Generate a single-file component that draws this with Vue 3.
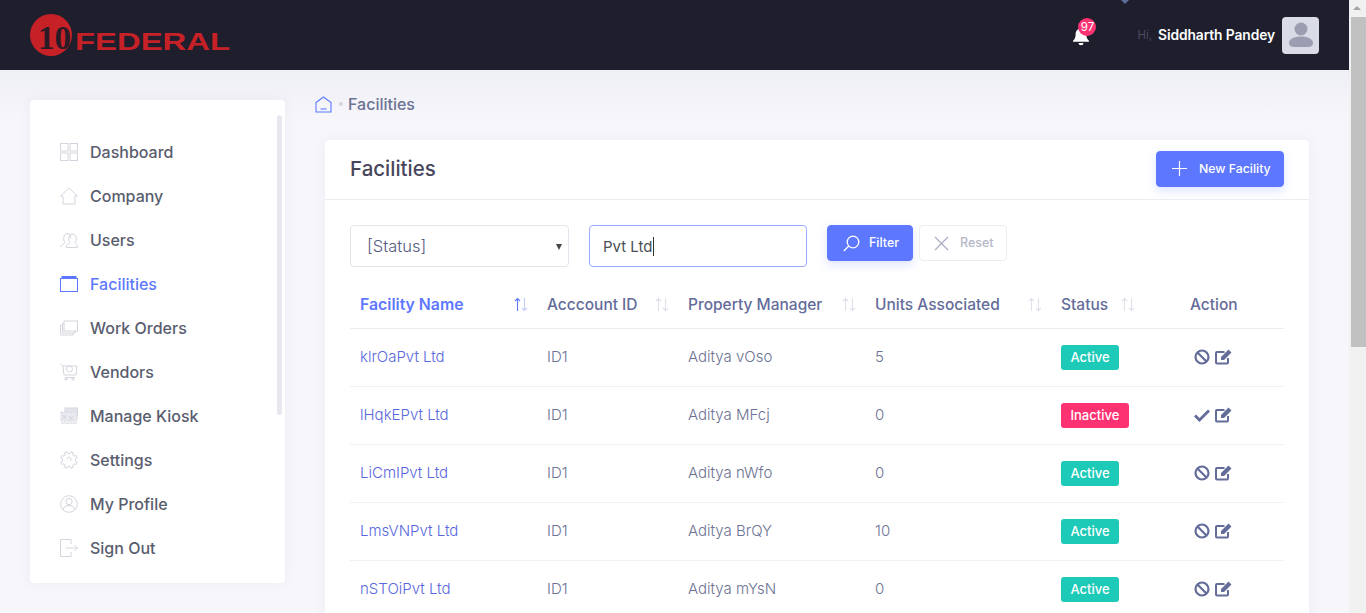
<script setup>
const menu = [
  { label: 'Dashboard', icon: 'dash' },
  { label: 'Company', icon: 'home' },
  { label: 'Users', icon: 'users' },
  { label: 'Facilities', icon: 'fac', active: true },
  { label: 'Work Orders', icon: 'orders' },
  { label: 'Vendors', icon: 'cart' },
  { label: 'Manage Kiosk', icon: 'kiosk' },
  { label: 'Settings', icon: 'gear' },
  { label: 'My Profile', icon: 'profile' },
  { label: 'Sign Out', icon: 'out' }
]
const cols = [
  { label: 'Facility Name', active: true },
  { label: 'Acccount ID' },
  { label: 'Property Manager' },
  { label: 'Units Associated' },
  { label: 'Status', inline: true }
]
const rows = [
  { name: 'klrOaPvt Ltd', id: 'ID1', pm: 'Aditya vOso', units: 5, active: true },
  { name: 'lHqkEPvt Ltd', id: 'ID1', pm: 'Aditya MFcj', units: 0, active: false },
  { name: 'LiCmIPvt Ltd', id: 'ID1', pm: 'Aditya nWfo', units: 0, active: true },
  { name: 'LmsVNPvt Ltd', id: 'ID1', pm: 'Aditya BrQY', units: 10, active: true },
  { name: 'nSTOiPvt Ltd', id: 'ID1', pm: 'Aditya mYsN', units: 0, active: true }
]
const pt = (r, deg) => {
  const a = (deg * Math.PI) / 180
  return `${(9 + r * Math.cos(a)).toFixed(2)} ${(9 + r * Math.sin(a)).toFixed(2)}`
}
const gearPath = Array.from({ length: 8 }, (_, k) => {
  const c = k * 45 + 22.5
  return `${k ? 'L' : 'M'}${pt(6.4, c - 14)}L${pt(8.5, c - 9)}L${pt(8.5, c + 9)}L${pt(6.4, c + 14)}`
}).join('') + 'Z'
</script>

<template>
  <div class="page">
    <header class="topbar">
      <svg class="logo" width="204" height="44" viewBox="0 0 204 44">
        <circle cx="21" cy="22" r="21" fill="#c62127" />
        <text x="24.500" y="36" text-anchor="middle" font-family="Liberation Serif, serif" font-weight="700" font-size="34" fill="#2a1c26" textLength="33" lengthAdjust="spacingAndGlyphs">10</text>
        <text x="45" y="36.500" font-family="Liberation Sans, sans-serif" font-weight="700" font-size="24" fill="#c62127" textLength="155" lengthAdjust="spacingAndGlyphs">FEDERAL</text>
      </svg>
      <div class="top-right">
        <div class="bell">
          <svg width="18" height="19" viewBox="0 0 18 19">
            <path d="M9 1.500c3.600 0 5.400 2.800 5.400 6 0 3.400 1 4.800 2.600 6.300v1H1v-1c1.600-1.500 2.600-2.900 2.600-6.300 0-3.200 1.800-6 5.400-6z" fill="#fff" />
            <path d="M6.500 16h5a2.500 2.200 0 0 1-5 0z" fill="#fff" />
          </svg>
          <span class="bell-badge">97</span>
        </div>
        <span class="hi">Hi,</span>
        <span class="uname">Siddharth Pandey</span>
        <div class="avatar">
          <svg width="24" height="26" viewBox="0 0 24 26">
            <circle cx="12" cy="7" r="6.500" fill="#9a9eb0" />
            <path d="M0 21c0-4 5-6.500 12-6.500S24 17 24 21c0 2.500-2 4-5 4H5c-3 0-5-1.500-5-4z" fill="#9a9eb0" />
          </svg>
        </div>
      </div>
      <span class="notch"></span>
    </header>

    <div class="body">
      <aside class="sidebar">
        <span class="side-scroll"></span>
        <a v-for="m in menu" :key="m.label" class="item" :class="{ on: m.active }">
          <svg class="mi" width="18" height="18" viewBox="0 0 18 18" fill="none" stroke="currentColor" stroke-width="1">
            <template v-if="m.icon === 'dash'">
              <rect x="0.500" y="0.500" width="7.500" height="7.500" /><rect x="10" y="0.500" width="7.500" height="7.500" />
              <rect x="0.500" y="10" width="7.500" height="7.500" /><rect x="10" y="10" width="7.500" height="7.500" />
            </template>
            <path v-else-if="m.icon === 'home'" d="M0.500 9 9 1l8.500 8H15v8H3V9z" />
            <template v-else-if="m.icon === 'users'">
              <path d="M0.500 16.500c0-3 4-3 4.500-5-2-2-2-8 2-9 3 0 4 2 3.500 5" />
              <path d="M6 16.500c0-3 3-3 4-5-2-2-2-8 2.500-8.500 4.500.5 4.500 6.500 2.500 8.500 1 2 2.500 2 2.500 5z" />
            </template>
            <template v-else-if="m.icon === 'fac'">
              <rect x="0.500" y="3.500" width="17" height="13" />
              <rect x="1.500" y="1" width="15" height="3" fill="currentColor" stroke="none" />
            </template>
            <template v-else-if="m.icon === 'orders'">
              <rect x="4" y="2" width="13.500" height="10" />
              <path d="M4 4.500H2.500V14H15v-2M2.500 6.500H.5V16H13v-2" />
            </template>
            <template v-else-if="m.icon === 'cart'">
              <path d="M0.500 1 3 3h14l-1 9H4L3 3" />
              <circle cx="9.500" cy="6" r="3" />
              <path d="M5 14.500h10" />
              <circle cx="6" cy="16" r="1.200" /><circle cx="13" cy="16" r="1.200" />
            </template>
            <template v-else-if="m.icon === 'kiosk'">
              <rect x="5" y="1" width="12.500" height="8" fill="#e4e5ec" />
              <rect x="1" y="5" width="16" height="9" fill="#e9eaf0" stroke-dasharray="2 1" />
              <path d="M3 8l3 4M6 8l-3 4M9 9l4 4M13 9l-4 4M1 16h16" />
            </template>
            <template v-else-if="m.icon === 'gear'">
              <path :d="gearPath" />
              <path d="M7 8a2 2 0 1 1 3 2" />
            </template>
            <template v-else-if="m.icon === 'profile'">
              <circle cx="9" cy="9" r="8.300" />
              <circle cx="9" cy="6.500" r="3.200" />
              <path d="M3 14.500c1-3 3-4 6-4s5 1 6 4" />
            </template>
            <template v-else-if="m.icon === 'out'">
              <path d="M11 5V.5H.5v17H11V13" />
              <path d="M6 9h11.500M14.500 6l3 3-3 3" />
            </template>
          </svg>
          <span>{{ m.label }}</span>
        </a>
      </aside>

      <main class="main">
        <div class="crumb">
          <svg width="17" height="17" viewBox="0 0 17 17" fill="none" stroke="#5d78ff" stroke-width="1.100">
            <path d="M1 6.500 8.500 1 16 6.500V16H1z" /><path d="M5.500 13h6" />
          </svg>
          <i class="dot"></i>
          <span>Facilities</span>
        </div>
        <section class="card">
          <div class="card-head">
            <h3>Facilities</h3>
            <button class="btn primary new">
              <svg width="15" height="15" viewBox="0 0 15 15" stroke="#fff" stroke-width="1.200"><path d="M7.500 0v15M0 7.500h15" /></svg>
              New Facility
            </button>
          </div>
          <div class="card-body">
            <div class="filters">
              <div class="sel-wrap"><select class="sel"><option>[Status]</option></select></div>
              <div class="txt"><span>Pvt Ltd</span><i class="caret"></i></div>
              <button class="btn primary filter">
                <svg width="17" height="17" viewBox="0 0 17 17" fill="none" stroke="#fff" stroke-width="1.300"><circle cx="10" cy="7" r="5.800" /><path d="M5.800 11 .8 16" /></svg>
                Filter
              </button>
              <button class="btn reset">
                <svg width="15" height="15" viewBox="0 0 15 15" stroke="#a9adc3" stroke-width="1.200"><path d="M1 1l13 13M14 1 1 14" /></svg>
                Reset
              </button>
            </div>
            <table class="tbl">
              <colgroup>
                <col style="width:187px" /><col style="width:141px" /><col style="width:187px" />
                <col style="width:186px" /><col style="width:129px" /><col />
              </colgroup>
              <thead>
                <tr>
                  <th v-for="c in cols" :key="c.label" :class="{ act: c.active }">
                    <div class="th" :class="{ inl: c.inline }">
                      <span>{{ c.label }}</span>
                      <svg class="sort" width="14" height="15" viewBox="0 0 14 15" fill="none" stroke-width="1.100">
                        <path d="M3.500 14V1.500M1 4l2.500-2.500L6 4" :stroke="c.active ? '#5d78ff' : '#dfe1ea'" />
                        <path d="M10.500 1v12.500M8 11l2.500 2.500L13 11" :stroke="c.active ? '#c4cdf5' : '#dfe1ea'" />
                      </svg>
                    </div>
                  </th>
                  <th class="act-h">Action</th>
                </tr>
              </thead>
              <tbody>
                <tr v-for="r in rows" :key="r.name">
                  <td class="lnk"><span class="cell">{{ r.name }}</span></td>
                  <td><span class="cell">{{ r.id }}</span></td>
                  <td><span class="cell">{{ r.pm }}</span></td>
                  <td><span class="cell">{{ r.units }}</span></td>
                  <td><span class="badge" :class="r.active ? 'ok' : 'no'">{{ r.active ? 'Active' : 'Inactive' }}</span></td>
                  <td>
                    <div class="acts">
                      <svg width="16" height="16" viewBox="0 0 16 16" fill="none" stroke="#646c9a" stroke-width="2.200">
                        <template v-if="r.active"><circle cx="8" cy="8" r="6.500" /><path d="M3.500 3.500l9 9" /></template>
                        <path v-else d="M1 8.500l4.500 4.500L15 3.500" stroke-width="2.800" />
                      </svg>
                      <svg width="18" height="16" viewBox="0 0 18 16">
                        <path d="M13 9v4.500a1 1 0 0 1-1 1H2a1 1 0 0 1-1-1V4a1 1 0 0 1 1-1h7.500" fill="none" stroke="#646c9a" stroke-width="2" />
                        <path d="M6 8l7.500-7.500 3 3L9 11H6zM14.500 0l3 3" fill="#646c9a" />
                      </svg>
                    </div>
                  </td>
                </tr>
              </tbody>
            </table>
          </div>
        </section>
      </main>
    </div>

    <div class="vscroll"><span class="arrow"></span><span class="thumb"></span></div>
  </div>
</template>

<style>
html, body { margin: 0; height: 100%; overflow: hidden; background: #f7f7fb; }
</style>

<style scoped>
.page { position: relative; width: 1366px; height: 613px; overflow: hidden; font-family: Inter, "Noto Sans", sans-serif; color: #646c9a; padding-right: 17px; box-sizing: border-box; background: linear-gradient(#eeeff5 70px, #f6f6fb 120px); }
.topbar { position: relative; height: 70px; background: #1e1e2d; display: flex; align-items: center; justify-content: space-between; padding: 0 30px; }
.logo { display: block; }
.notch { position: absolute; left: 1121px; top: 0; border: 4px solid transparent; border-top-color: #5f6a9c; border-bottom: 0; }
.top-right { display: flex; align-items: center; }
.bell { position: relative; width: 18px; height: 19px; margin-right: 47px; margin-top: 2px; }
.bell svg { display: block; }
.bell-badge { position: absolute; left: 6px; top: -9px; width: 18px; height: 18px; border-radius: 50%; background: #fd3273; color: #fff; font-size: 11.500px; line-height: 18px; text-align: center; }
.hi { font-size: 11.500px; color: #4a4a5c; margin-right: 6px; }
.uname { font-size: 13.800px; font-weight: 600; color: #fff; margin-right: 7px; letter-spacing: -0.100px; }
.avatar { width: 37px; height: 37px; border-radius: 4px; background: #d9dce6; display: flex; align-items: flex-end; justify-content: center; padding-bottom: 6px; box-sizing: border-box; }
.body { display: flex; align-items: flex-start; padding: 30px 40px 0 30px; }
.sidebar { position: relative; width: 255px; flex: none; background: #fff; border-radius: 4px; padding: 30px 0 13px 30px; box-sizing: border-box; box-shadow: 0 0 13px rgba(82,63,105,.05); }
.side-scroll { position: absolute; right: 3px; top: 15px; width: 5px; height: 300px; border-radius: 3px; background: #e7e8ef; }
.item { display: flex; align-items: center; height: 44px; gap: 12px; font-size: 16px; font-weight: 500; color: #595d6e; }
.item .mi { color: #d4d5de; flex: none; }
.item.on, .item.on .mi { color: #5d78ff; }
.main { flex: 1; min-width: 0; padding-left: 30px; }
.crumb { display: flex; align-items: center; height: 20px; margin-top: -6px; margin-bottom: 26px; font-size: 16px; font-weight: 500; color: #6c7293; }
.dot { width: 4px; height: 4px; border-radius: 50%; background: #d5d6e2; margin: 0 5px 0 7px; }
.card { width: 984px; margin-left: 10px; background: #fff; border-radius: 4px; box-shadow: 0 0 13px rgba(82,63,105,.05); }
.card-head { display: flex; align-items: center; justify-content: space-between; height: 59px; padding: 0 25px; border-bottom: 1px solid #ebedf2; }
.card-head h3 { margin: 0 0 2px; font-size: 20.500px; font-weight: 500; color: #48465b; }
.btn { display: inline-flex; align-items: center; border-radius: 4px; font-family: inherit; font-size: 12.500px; font-weight: 500; box-sizing: border-box; }
.primary { background: #5d78ff; border: 1px solid #5d78ff; color: #fff; box-shadow: 0 4px 10px rgba(93,120,255,.2); }
.new { width: 128px; height: 36px; padding-left: 15px; gap: 12px; margin-bottom: 2px; font-size: 12.300px; }
.card-body { padding: 25px 25px 0; }
.filters { display: flex; align-items: flex-start; height: 55px; }
.sel-wrap { position: relative; width: 219px; height: 42px; }
.sel-wrap::after { content: ""; position: absolute; right: 7px; top: 19px; border: 3.500px solid transparent; border-top: 6px solid #444; border-bottom: 0; pointer-events: none; }
.sel { appearance: none; width: 100%; height: 100%; border: 1px solid #e2e5ec; border-radius: 4px; background: #fff; padding-left: 16px; font-family: inherit; font-size: 16.500px; font-weight: 300; color: #555b80; }
.txt { width: 218px; height: 42px; box-sizing: border-box; margin-left: 20px; padding-left: 13px; display: flex; align-items: center; border: 1px solid #9aabff; border-radius: 4px; font-size: 15px; color: #495057; }
.caret { width: 1px; height: 19px; background: #333; margin-left: 1px; }
.filter { width: 86px; height: 36px; margin-left: 20px; padding: 0 0 2px 15px; gap: 9px; }
.filter svg, .reset svg { margin-top: 2px; }
.reset { width: 88px; height: 36px; margin-left: 6px; padding: 0 0 2px 14px; gap: 11px; background: #fff; border: 1px solid #ebedf2; color: #b5b7c8; }
.tbl { width: 934px; table-layout: fixed; border-collapse: collapse; }
th { height: 48px; padding: 1px 10px 0; box-sizing: border-box; text-align: left; font-size: 15.500px; font-weight: 500; color: #646c9a; border-bottom: 1px solid #ebedf2; }
th.act { color: #5d78ff; font-weight: 600; font-size: 15.800px; }
.th { display: flex; align-items: center; justify-content: space-between; white-space: nowrap; }
.th.inl { justify-content: flex-start; gap: 13px; }
.sort { flex: none; margin-right: -1px; }
td { height: 58px; padding: 0 10px; box-sizing: border-box; font-size: 15px; font-weight: 300; color: #6c7293; border-bottom: 1px solid #f0f0f6; }
td.lnk { color: #5867dd; }
.cell { display: inline-block; transform: translateY(-1px); }
.badge { display: inline-block; height: 25px; line-height: 24px; padding: 0 9.500px; border-radius: 3px; font-size: 13px; font-weight: 500; color: #fff; }
.ok { background: #1dc9b7; }
.no { background: #fd3273; }
.acts { display: flex; align-items: center; gap: 5px; padding-left: 4px; margin-top: -1px; }
.vscroll { position: absolute; right: 0; top: 0; width: 17px; height: 613px; background: #f1f1f1; }
.arrow { position: absolute; left: 4px; top: 6px; border: 4.500px solid transparent; border-bottom: 4.500px solid #a3a3a3; border-top: 0; }
.thumb { position: absolute; left: 2px; top: 17px; width: 15px; height: 330px; background: #c1c1c1; }
</style>
